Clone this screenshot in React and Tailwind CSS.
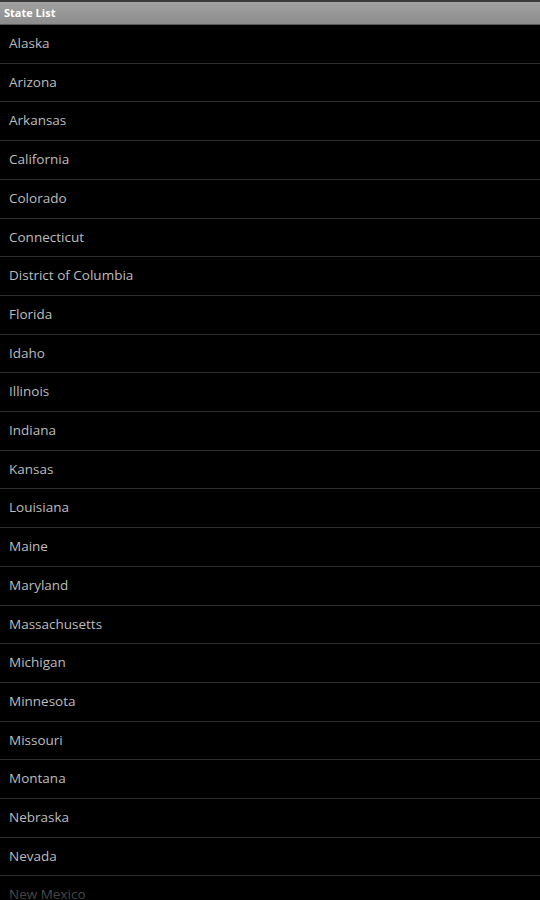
import React from "react";

const states = [
  "Alaska",
  "Arizona",
  "Arkansas",
  "California",
  "Colorado",
  "Connecticut",
  "District of Columbia",
  "Florida",
  "Idaho",
  "Illinois",
  "Indiana",
  "Kansas",
  "Louisiana",
  "Maine",
  "Maryland",
  "Massachusetts",
  "Michigan",
  "Minnesota",
  "Missouri",
  "Montana",
  "Nebraska",
  "Nevada",
  "New Mexico",
  "New York",
];

const App = () => {
  return (
    <div className="relative h-[900px] w-[540px] overflow-hidden bg-black font-['Open_Sans','Noto_Sans',sans-serif]">
      {/* Title bar */}
      <div className="h-[25px] border-t-2 border-b border-t-[#3a3a3a] border-b-[#5a5a5a] bg-gradient-to-b from-[#a2a2a2] to-[#8c8c8c] px-[4px] text-[11px] font-bold leading-[21px] text-white">
        State List
      </div>

      {/* List */}
      <div className="flex flex-col">
        {states.map((name) => (
          <div
            key={name}
            className="h-[38.71px] shrink-0 border-b border-[#2e2e2e] pl-[9px] text-[13.5px] leading-[37px] text-[#bdbdbd]"
          >
            {name}
          </div>
        ))}
      </div>

      {/* Fading edge */}
      <div className="pointer-events-none absolute bottom-0 left-0 h-[22px] w-full bg-gradient-to-b from-black/40 to-black/70" />
    </div>
  );
};

export default App;
